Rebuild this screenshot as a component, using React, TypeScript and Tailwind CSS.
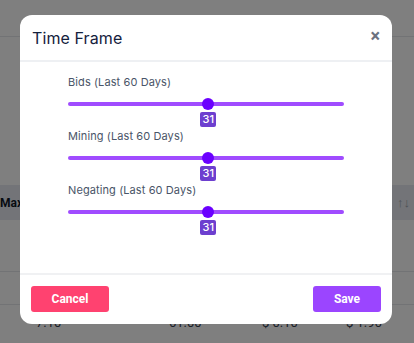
import React from "react";

const sliders = [
  { label: "Bids (Last 60 Days)", value: 31 },
  { label: "Mining (Last 60 Days)", value: 31 },
  { label: "Negating (Last 60 Days)", value: 31 },
];

const Slider = ({ label, value }: { label: string; value: number }) => {
  const pct = ((value - 1) / (60 - 1)) * 100;
  return (
    <div className="w-[276px] mb-[1px]">
      <p className="text-[11px] leading-4 text-[#4a5568] tracking-[0.1px]">{label}</p>
      <div className="relative h-3 mt-2 flex items-center">
        <div className="w-full h-[4px] rounded-full bg-[#a04cff]" />
        <div
          className="absolute top-0 w-3 h-3 -ml-[6px] rounded-full bg-[#6b00ff]"
          style={{ left: `${pct}%` }}
        />
      </div>
      <div className="relative h-[15px] mt-[2px]">
        <span
          className="absolute top-0 -ml-[8px] w-4 h-[15px] rounded-[2px] bg-[#6d3fcf] text-white text-[11px] leading-[15px] text-center font-medium"
          style={{ left: `${pct}%` }}
        >
          {value}
        </span>
      </div>
    </div>
  );
};

const App = () => {
  return (
    <div className="relative w-[414px] h-[343px] overflow-hidden bg-white font-['Roboto',sans-serif]">
      {/* page underneath */}
      <div className="h-[37px] border-b border-[#e5e7eb]" />
      <div className="h-[148px]" />
      <div className="h-[35px] bg-[#e6e9f0] flex items-center justify-between pr-1">
        <span className="text-[12px] font-bold text-[#111827]">Max</span>
        <span className="text-[13px] text-[#9ca3af]">↑↓</span>
      </div>
      <div className="h-[52px] border-b border-[#e5e7eb]" />
      <div className="h-[33px] border-b border-[#e5e7eb]" />
      <div className="h-[33px] relative text-[13px] text-[#374151]">
        <span className="absolute left-[36px] top-[8px]">7.10</span>
        <span className="absolute left-[169px] top-[8px]">61.00</span>
        <span className="absolute left-[262px] top-[8px]">$ 0.10</span>
        <span className="absolute left-[346px] top-[8px]">$ 1.96</span>
      </div>

      {/* overlay + modal */}
      <div className="absolute inset-0 bg-black/50 pl-[20px] pt-[15px]">
        <div className="w-[372px] h-[309px] bg-white rounded-xl flex flex-col overflow-hidden">
          <div className="h-[47px] flex items-center justify-between pl-[12px] pr-[12px] border-b-2 border-[#eef0f3]">
            <h2 className="text-[16px] text-[#14213d] font-['Inter',sans-serif] tracking-[0.1px]">
              Time Frame
            </h2>
            <span className="text-[18px] leading-none font-bold text-[#6b7280] -mt-[4px]">×</span>
          </div>
          <div className="h-[211px] pt-3 flex flex-col items-center font-['Inter',sans-serif]">
            {sliders.map((s) => (
              <Slider key={s.label} label={s.label} value={s.value} />
            ))}
          </div>
          <div className="flex-1 border-t-2 border-[#f0f1f3] flex items-start justify-between px-[11px] pt-[11px]">
            <button className="w-[78px] h-[26px] rounded-[3px] bg-[#ff4270] text-white text-[12px] font-bold">
              Cancel
            </button>
            <button className="w-[68px] h-[26px] rounded-[3px] bg-[#9b45ff] text-white text-[12px] font-bold">
              Save
            </button>
          </div>
        </div>
      </div>
    </div>
  );
};

export default App;
